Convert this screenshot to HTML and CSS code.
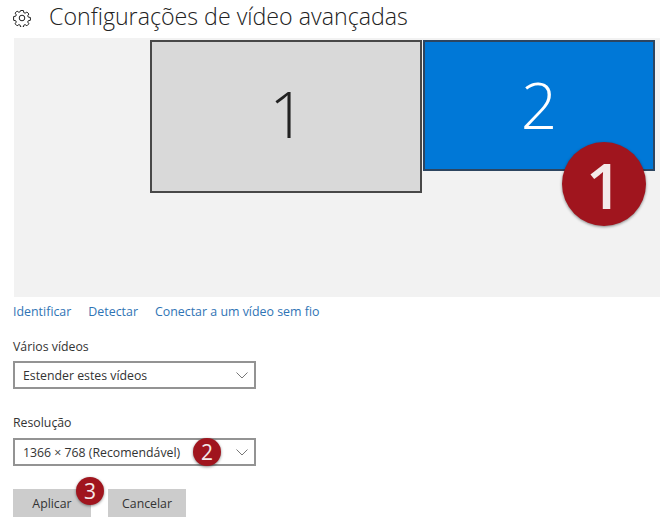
FILE: index.html
```html
<!DOCTYPE html>
<html lang="pt">

<head>
  <meta charset="UTF-8" />
  <title>Configurações de vídeo avançadas</title>
  <link rel="stylesheet" href="styles.css">
</head>

<body>
  <div class="header">
    <svg class="gear" viewBox="0 0 18 18" width="18" height="18" fill="none" stroke="#222" stroke-width="1">
      <path d="M7.6 1.5h2.8l.4 2.1 1.3.6 1.8-1.2 2 2-1.200 1.800.6 1.300 2.100.4v2.800l-2.100.4-.6 1.300 1.200 1.800-2 2-1.800-1.200-1.300.6-.4 2.100H7.600l-.4-2.100-1.300-.6-1.800 1.200-2-2 1.200-1.800-.6-1.300-2.100-.4V7.600l2.100-.4.6-1.300-1.200-1.800 2-2 1.800 1.200 1.300-.6z" />
      <circle cx="9" cy="9" r="2.800" />
    </svg>
    <h1 class="title">Configurações de vídeo avançadas</h1>
  </div>

  <div class="canvas">
    <div class="monitor monitor-one">1</div>
    <div class="monitor monitor-two">2</div>
    <span class="badge badge-big">1</span>
  </div>

  <div class="links">
    <a>Identificar</a>
    <a>Detectar</a>
    <a>Conectar a um vídeo sem fio</a>
  </div>

  <div class="field field-first">
    <label class="field-label">Vários vídeos</label>
    <div class="select">
      <span>Estender estes vídeos</span>
      <svg class="chevron" viewBox="0 0 12 7" width="12" height="7" fill="none" stroke="#777" stroke-width="1">
        <path d="M.5 .5 6 6 11.500 .5" />
      </svg>
    </div>
  </div>

  <div class="field field-second">
    <label class="field-label">Resolução</label>
    <div class="select">
      <span>1366 × 768 (Recomendável)</span>
      <svg class="chevron" viewBox="0 0 12 7" width="12" height="7" fill="none" stroke="#777" stroke-width="1">
        <path d="M.5 .5 6 6 11.500 .5" />
      </svg>
      <span class="badge badge-small badge-two">2</span>
    </div>
  </div>

  <div class="buttons">
    <button class="button">Aplicar</button>
    <button class="button">Cancelar</button>
    <span class="badge badge-small badge-three">3</span>
  </div>
</body>

</html>
```

FILE: styles.css
```css
body {
  font-family: "Open Sans", "Noto Sans", sans-serif;
  background-color: #fff;
  color: #333;
  margin: 0;
  padding: 0;
  width: 660px;
  height: 524px;
  overflow: hidden;
  position: relative;
}

.header {
  display: flex;
  align-items: center;
  height: 38px;
  padding-left: 13px;
  padding-bottom: 6px;
  box-sizing: border-box;
}

.gear {
  flex: none;
  margin-top: 3px;
}

.title {
  margin: 0 0 0 18px;
  font-size: 23.200px;
  font-weight: 300;
  color: #222;
  white-space: nowrap;
}

.canvas {
  position: relative;
  margin-left: 14px;
  height: 259px;
  background-color: #f2f2f2;
}

.monitor {
  position: absolute;
  display: flex;
  align-items: center;
  justify-content: center;
  box-sizing: border-box;
  border: 2px solid #484848;
  font-family: "Open Sans", sans-serif;
  font-weight: 300;
  font-size: 64px;
}

.monitor-one {
  left: 136px;
  top: 2px;
  width: 272px;
  height: 153px;
  padding: 0 0 7px 3px;
  background-color: #d9d9d9;
  color: #222;
}

.monitor-two {
  left: 409px;
  top: 2px;
  width: 232px;
  height: 131px;
  padding: 0 0 3px 0;
  background-color: #0078d7;
  border-color: #2d4560;
  color: #fff;
}

.badge {
  position: absolute;
  display: flex;
  align-items: center;
  justify-content: center;
  border-radius: 50%;
  background-color: #a0151e;
  color: #f4eaea;
  font-family: "Open Sans", sans-serif;
  box-shadow: 0 1px 3px rgba(0, 0, 0, 0.45);
}

.badge-big {
  left: 548px;
  top: 104px;
  width: 84px;
  height: 84px;
  font-size: 64px;
  font-weight: 600;
}

.badge-small {
  width: 28px;
  height: 28px;
  font-size: 21px;
}

.badge-two {
  left: 178px;
  top: -2px;
}

.badge-three {
  left: 63px;
  top: -12px;
}

.links {
  display: flex;
  gap: 17px;
  margin: 6px 0 0 13px;
  height: 20px;
  font-size: 12.400px;
  line-height: 17px;
  color: #2f74b5;
}

.field {
  margin-left: 13px;
}

.field-first {
  margin-top: 15px;
}

.field-second {
  margin-top: 25px;
}

.field-first .field-label {
  height: 23px;
}

.field-second .field-label {
  height: 24px;
}

.field-label {
  display: block;
  font-size: 12.300px;
  line-height: 17px;
  color: #333;
}

.select {
  position: relative;
  display: flex;
  align-items: center;
  justify-content: space-between;
  box-sizing: border-box;
  width: 243px;
  height: 28px;
  padding: 0 6px 0 8px;
  border: 2px solid #939393;
  background-color: #fff;
  font-size: 12.300px;
  color: #333;
}

.buttons {
  position: relative;
  display: flex;
  gap: 17px;
  margin: 23px 0 0 13px;
}

.button {
  width: 78px;
  height: 28px;
  padding: 0;
  border: none;
  background-color: #cccccc;
  font-family: inherit;
  font-size: 12.300px;
  color: #333;
}
```
